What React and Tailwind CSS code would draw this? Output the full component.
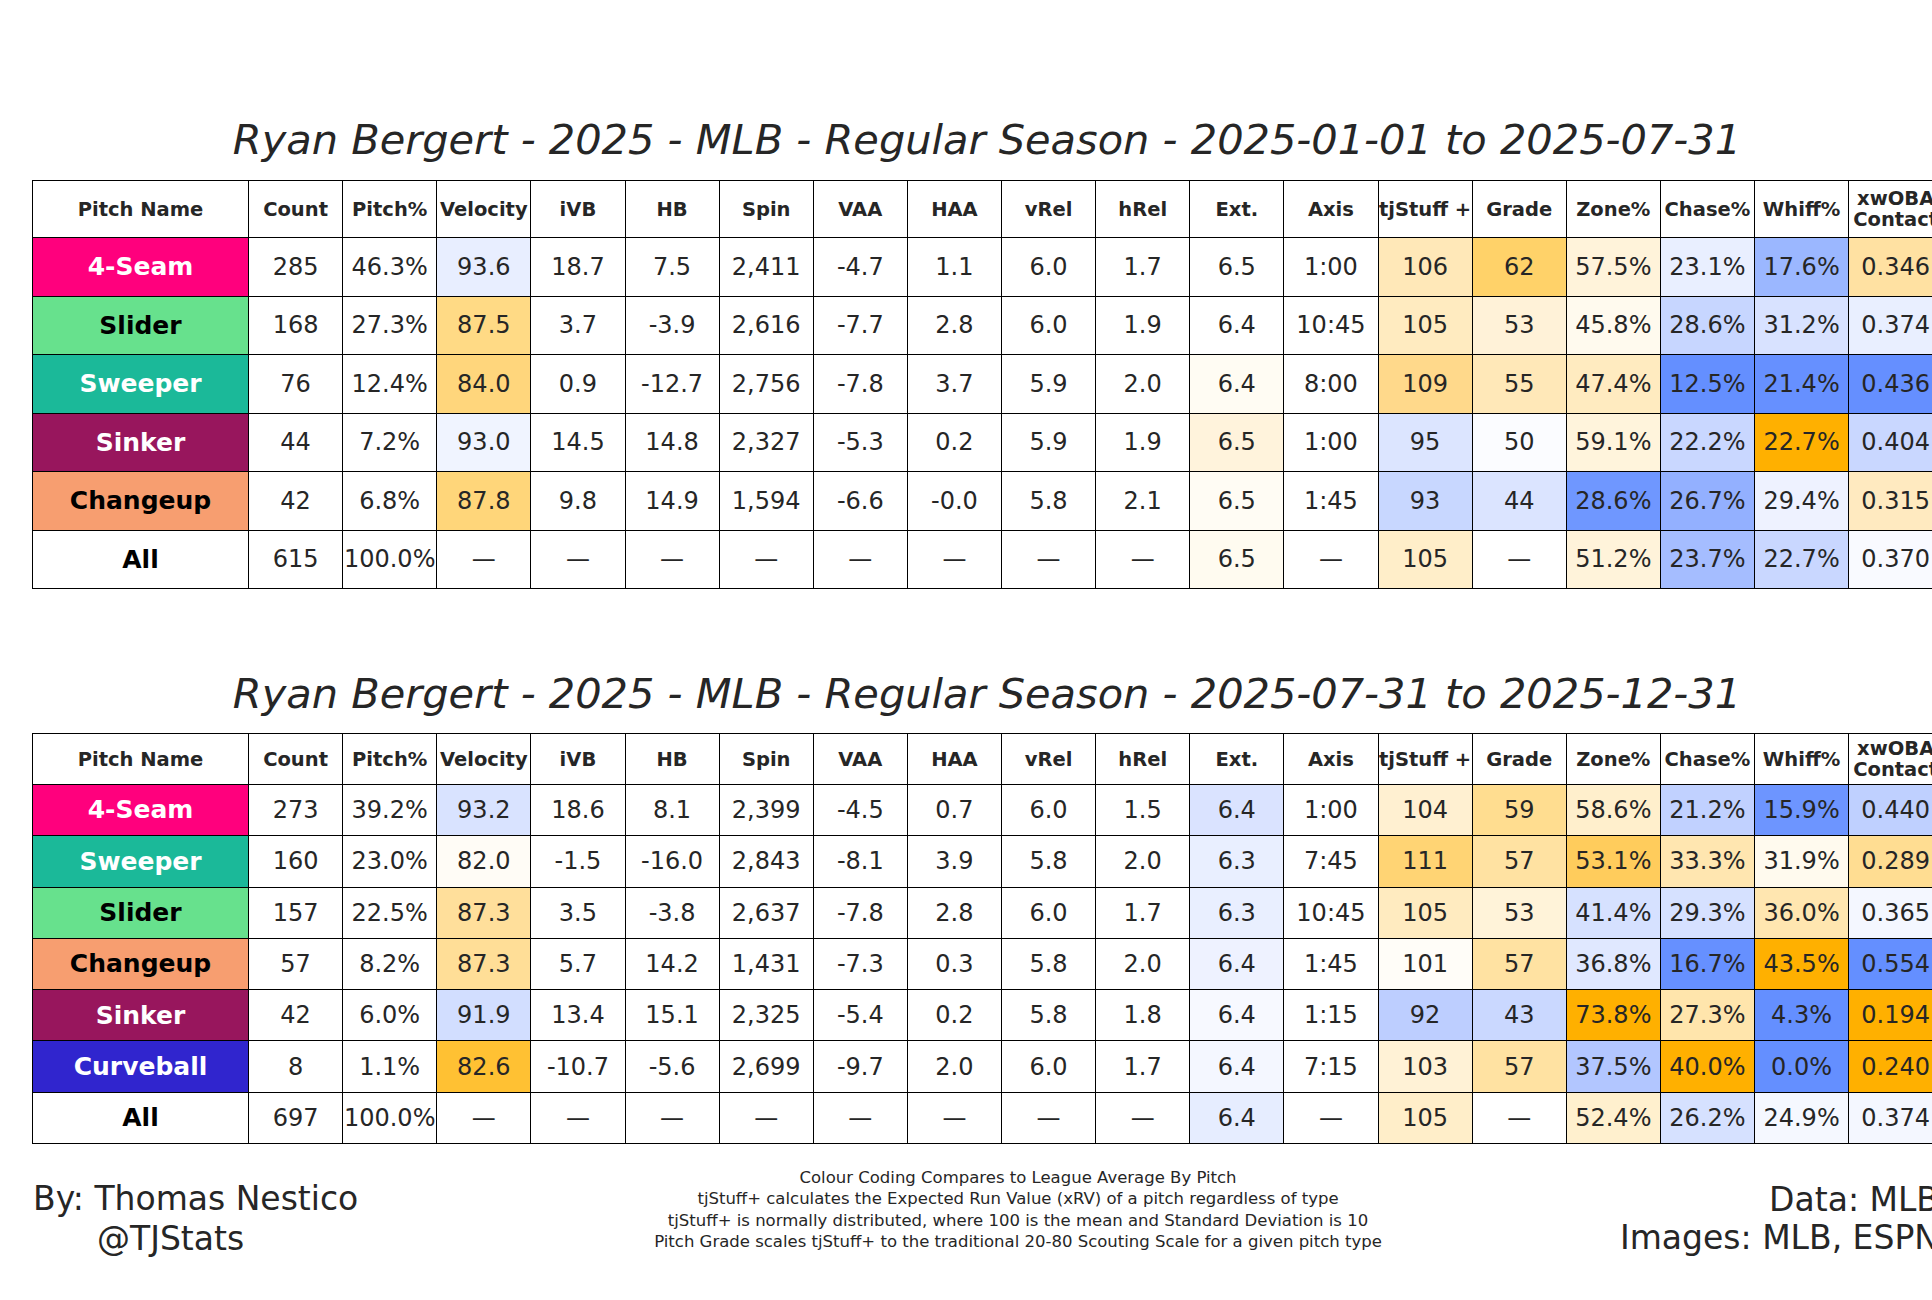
import React from "react";

const COLS = "grid grid-cols-[216px_repeat(18,94.125px)]";

const HEAD = [
  "Pitch Name", "Count", "Pitch%", "Velocity", "iVB", "HB", "Spin", "VAA", "HAA",
  "vRel", "hRel", "Ext.", "Axis", "tjStuff +", "Grade", "Zone%", "Chase%", "Whiff%", "xwOBA\nContact",
];

const PITCH = {
  "4-Seam": "bg-[#FF007D] text-white",
  Slider: "bg-[#67E18D] text-black",
  Sweeper: "bg-[#1BB999] text-white",
  Sinker: "bg-[#98165D] text-white",
  Changeup: "bg-[#F79E70] text-black",
  Curveball: "bg-[#3025CE] text-white",
  All: "bg-white text-black",
};

const COLORED = [2, 10, 12, 13, 14, 15, 16, 17];
const D = "—";

const T1 = [
  { n: "4-Seam", v: ["285", "46.3%", "93.6", "18.7", "7.5", "2,411", "-4.7", "1.1", "6.0", "1.7", "6.5", "1:00", "106", "62", "57.5%", "23.1%", "17.6%", "0.346"],
    c: ["bg-[#E8EEFF]", "bg-white", "bg-[#FFE8B8]", "bg-[#FFD269]", "bg-[#FFF3DA]", "bg-[#E9EFFF]", "bg-[#9BB7FF]", "bg-[#FFE1A2]"] },
  { n: "Slider", v: ["168", "27.3%", "87.5", "3.7", "-3.9", "2,616", "-7.7", "2.8", "6.0", "1.9", "6.4", "10:45", "105", "53", "45.8%", "28.6%", "31.2%", "0.374"],
    c: ["bg-[#FFDA85]", "bg-white", "bg-[#FFEBC0]", "bg-[#FFF2D8]", "bg-[#FFFAEE]", "bg-[#C7D6FF]", "bg-[#D8E2FF]", "bg-[#E9EFFF]"] },
  { n: "Sweeper", v: ["76", "12.4%", "84.0", "0.9", "-12.7", "2,756", "-7.8", "3.7", "5.9", "2.0", "6.4", "8:00", "109", "55", "47.4%", "12.5%", "21.4%", "0.436"],
    c: ["bg-[#FFD67C]", "bg-[#FFFCF3]", "bg-[#FFD98B]", "bg-[#FFE8B8]", "bg-[#FFEBC0]", "bg-[#648FFF]", "bg-[#6690FF]", "bg-[#658FFF]"] },
  { n: "Sinker", v: ["44", "7.2%", "93.0", "14.5", "14.8", "2,327", "-5.3", "0.2", "5.9", "1.9", "6.5", "1:00", "95", "50", "59.1%", "22.2%", "22.7%", "0.404"],
    c: ["bg-[#F0F4FF]", "bg-[#FFF3DC]", "bg-[#DCE5FF]", "bg-[#FBFCFF]", "bg-[#FFF4DC]", "bg-[#C9D7FF]", "bg-[#FFB000]", "bg-[#C9D7FF]"] },
  { n: "Changeup", v: ["42", "6.8%", "87.8", "9.8", "14.9", "1,594", "-6.6", "-0.0", "5.8", "2.1", "6.5", "1:45", "93", "44", "28.6%", "26.7%", "29.4%", "0.315"],
    c: ["bg-[#FFD67A]", "bg-[#FFFCF4]", "bg-[#C8D7FF]", "bg-[#DBE4FF]", "bg-[#6F97FF]", "bg-[#93B0FF]", "bg-[#EEF2FF]", "bg-[#FFEAC0]"] },
  { n: "All", v: ["615", "100.0%", D, D, D, D, D, D, D, D, "6.5", D, "105", D, "51.2%", "23.7%", "22.7%", "0.370"],
    c: ["bg-white", "bg-[#FFFBF0]", "bg-[#FFEEC9]", "bg-white", "bg-[#FFF3DA]", "bg-[#A5BDFF]", "bg-[#C9D7FF]", "bg-[#F9FAFF]"] },
];

const T2 = [
  { n: "4-Seam", v: ["273", "39.2%", "93.2", "18.6", "8.1", "2,399", "-4.5", "0.7", "6.0", "1.5", "6.4", "1:00", "104", "59", "58.6%", "21.2%", "15.9%", "0.440"],
    c: ["bg-[#D9E3FF]", "bg-[#DAE3FF]", "bg-[#FFF0D1]", "bg-[#FFDD90]", "bg-[#FFEFCC]", "bg-[#C1D1FF]", "bg-[#6D95FF]", "bg-[#BFD0FF]"] },
  { n: "Sweeper", v: ["160", "23.0%", "82.0", "-1.5", "-16.0", "2,843", "-8.1", "3.9", "5.8", "2.0", "6.3", "7:45", "111", "57", "53.1%", "33.3%", "31.9%", "0.289"],
    c: ["bg-[#FFFCF6]", "bg-[#E9EFFF]", "bg-[#FFD474]", "bg-[#FFE2A2]", "bg-[#FFCC5C]", "bg-[#FFE6B0]", "bg-[#FFFAEE]", "bg-[#FFDD92]"] },
  { n: "Slider", v: ["157", "22.5%", "87.3", "3.5", "-3.8", "2,637", "-7.8", "2.8", "6.0", "1.7", "6.3", "10:45", "105", "53", "41.4%", "29.3%", "36.0%", "0.365"],
    c: ["bg-[#FFDF9B]", "bg-[#E9EFFF]", "bg-[#FFEBC0]", "bg-[#FFF3D9]", "bg-[#D6E1FF]", "bg-[#D6E1FF]", "bg-[#FFE6B0]", "bg-[#F4F7FF]"] },
  { n: "Changeup", v: ["57", "8.2%", "87.3", "5.7", "14.2", "1,431", "-7.3", "0.3", "5.8", "2.0", "6.4", "1:45", "101", "57", "36.8%", "16.7%", "43.5%", "0.554"],
    c: ["bg-[#FFDE97]", "bg-[#EEF2FF]", "bg-[#FFFDF8]", "bg-[#FFE2A2]", "bg-[#E0E8FF]", "bg-[#6690FF]", "bg-[#FFB000]", "bg-[#648FFF]"] },
  { n: "Sinker", v: ["42", "6.0%", "91.9", "13.4", "15.1", "2,325", "-5.4", "0.2", "5.8", "1.8", "6.4", "1:15", "92", "43", "73.8%", "27.3%", "4.3%", "0.194"],
    c: ["bg-[#D2DEFF]", "bg-[#F7F9FF]", "bg-[#BDCEFF]", "bg-[#CAD8FF]", "bg-[#FFB000]", "bg-[#FFE5AC]", "bg-[#648FFF]", "bg-[#FFB000]"] },
  { n: "Curveball", v: ["8", "1.1%", "82.6", "-10.7", "-5.6", "2,699", "-9.7", "2.0", "6.0", "1.7", "6.4", "7:15", "103", "57", "37.5%", "40.0%", "0.0%", "0.240"],
    c: ["bg-[#FFC133]", "bg-[#F4F7FF]", "bg-[#FFF2D6]", "bg-[#FFE2A2]", "bg-[#B2C6FF]", "bg-[#FFB000]", "bg-[#648FFF]", "bg-[#FFB000]"] },
  { n: "All", v: ["697", "100.0%", D, D, D, D, D, D, D, D, "6.4", D, "105", D, "52.4%", "26.2%", "24.9%", "0.374"],
    c: ["bg-white", "bg-[#E6EDFF]", "bg-[#FFEEC9]", "bg-white", "bg-[#FFF0CE]", "bg-[#D6E1FF]", "bg-[#F5F8FF]", "bg-[#F4F7FF]"] },
];

const CELL = "flex items-center justify-center border-r border-b border-black whitespace-nowrap overflow-visible";

function Table({ rows, headH, rowH }) {
  return (
    <div className="border-l border-t border-black w-max">
      <div className={`${COLS} ${headH}`}>
        {HEAD.map((h, i) => (
          <div key={i} className={`${CELL} bg-white text-[19.5px] font-bold text-[#262626] text-center whitespace-pre-line leading-[21px]`}>
            {h}
          </div>
        ))}
      </div>
      {rows.map((r) => (
        <div key={r.n} className={`${COLS} ${rowH}`}>
          <div className={`${CELL} ${PITCH[r.n]} text-[25px] font-bold`}>{r.n}</div>
          {r.v.map((val, i) => {
            const ci = COLORED.indexOf(i);
            const bg = ci >= 0 ? r.c[ci] : "bg-white";
            return (
              <div key={i} className={`${CELL} ${bg} text-[24px] text-[#262626]`}>
                {val}
              </div>
            );
          })}
        </div>
      ))}
    </div>
  );
}

function Title({ children, className }) {
  return (
    <div className={`w-[1910px] text-center italic text-[41.5px] leading-[50px] text-[#262626] ${className}`}>
      {children}
    </div>
  );
}

export default function App() {
  return (
    <div className="w-[1932px] h-[1300px] overflow-hidden bg-white font-['DejaVu_Sans',sans-serif]">
      <div className="w-[1960px] pt-[115px]">
        <div className="ml-[32px]">
          <Title className="mb-[15px]">Ryan Bergert - 2025 - MLB - Regular Season - 2025-01-01 to 2025-07-31</Title>
          <Table rows={T1} headH="h-[57px]" rowH="h-[58.5px]" />
          <Title className="mt-[80px] mb-[14px]">Ryan Bergert - 2025 - MLB - Regular Season - 2025-07-31 to 2025-12-31</Title>
          <Table rows={T2} headH="h-[51px]" rowH="h-[51.3px]" />
        </div>
        <div className="flex w-[1939px] mt-[23px] text-[#262626]">
          <div className="w-[660px] pl-[33px] pt-[12px] text-[33px] leading-[40px] whitespace-nowrap">
            <div>By: Thomas Nestico</div>
            <div className="pl-[64px]">@TJStats</div>
          </div>
          <div className="w-[716px] text-center text-[16.5px] leading-[21.3px] whitespace-nowrap flex flex-col items-center">
            <div>Colour Coding Compares to League Average By Pitch</div>
            <div>tjStuff+ calculates the Expected Run Value (xRV) of a pitch regardless of type</div>
            <div>tjStuff+ is normally distributed, where 100 is the mean and Standard Deviation is 10</div>
            <div>Pitch Grade scales tjStuff+ to the traditional 20-80 Scouting Scale for a given pitch type</div>
          </div>
          <div className="flex-1 text-right pt-[14px] text-[33px] leading-[38px] whitespace-nowrap">
            <div>Data: MLB</div>
            <div>Images: MLB, ESPN</div>
          </div>
        </div>
      </div>
    </div>
  );
}
